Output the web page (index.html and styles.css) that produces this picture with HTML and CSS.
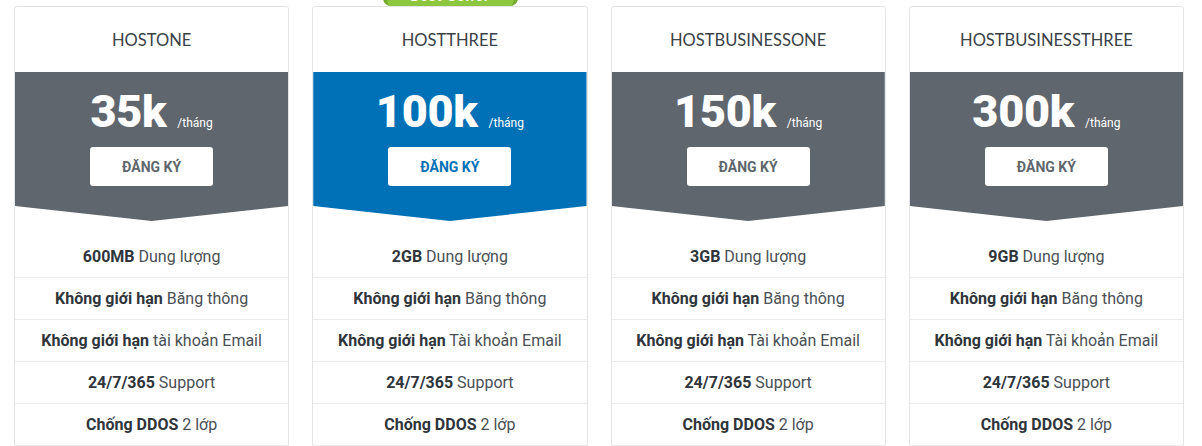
FILE: index.html
```html
<!DOCTYPE html>
<html lang="vi">
<head>
<meta charset="utf-8">
<title>Bảng giá Hosting</title>
<link rel="stylesheet" href="styles.css">
</head>
<body>
<div class="pricing">
  <div class="card">
    <div class="card-title">HOSTONE</div>
    <div class="band">
      <div class="price"><span class="amount">35k</span><span class="per">/tháng</span></div>
      <a class="btn" href="#">ĐĂNG KÝ</a>
    </div>
    <ul class="features">
      <li><b>600MB</b> Dung lượng</li>
      <li><b>Không giới hạn</b> Băng thông</li>
      <li><b>Không giới hạn</b> tài khoản Email</li>
      <li><b>24/7/365</b> Support</li>
      <li><b>Chống DDOS</b> 2 lớp</li>
    </ul>
  </div>
  <div class="card featured">
    <div class="badge">Best Seller</div>
    <div class="card-title">HOSTTHREE</div>
    <div class="band">
      <div class="price"><span class="amount">100k</span><span class="per">/tháng</span></div>
      <a class="btn" href="#">ĐĂNG KÝ</a>
    </div>
    <ul class="features">
      <li><b>2GB</b> Dung lượng</li>
      <li><b>Không giới hạn</b> Băng thông</li>
      <li><b>Không giới hạn</b> Tài khoản Email</li>
      <li><b>24/7/365</b> Support</li>
      <li><b>Chống DDOS</b> 2 lớp</li>
    </ul>
  </div>
  <div class="card">
    <div class="card-title">HOSTBUSINESSONE</div>
    <div class="band">
      <div class="price"><span class="amount">150k</span><span class="per">/tháng</span></div>
      <a class="btn" href="#">ĐĂNG KÝ</a>
    </div>
    <ul class="features">
      <li><b>3GB</b> Dung lượng</li>
      <li><b>Không giới hạn</b> Băng thông</li>
      <li><b>Không giới hạn</b> Tài khoản Email</li>
      <li><b>24/7/365</b> Support</li>
      <li><b>Chống DDOS</b> 2 lớp</li>
    </ul>
  </div>
  <div class="card">
    <div class="card-title">HOSTBUSINESSTHREE</div>
    <div class="band">
      <div class="price"><span class="amount">300k</span><span class="per">/tháng</span></div>
      <a class="btn" href="#">ĐĂNG KÝ</a>
    </div>
    <ul class="features">
      <li><b>9GB</b> Dung lượng</li>
      <li><b>Không giới hạn</b> Băng thông</li>
      <li><b>Không giới hạn</b> Tài khoản Email</li>
      <li><b>24/7/365</b> Support</li>
      <li><b>Chống DDOS</b> 2 lớp</li>
    </ul>
  </div>
</div>
</body>
</html>
```

FILE: styles.css
```css
html, body {
  margin: 0;
  padding: 0;
  background: #ffffff;
}

body {
  font-family: Roboto, "Liberation Sans", sans-serif;
  color: #444;
  overflow: hidden;
}

.pricing {
  display: grid;
  grid-template-columns: repeat(4, 1fr);
  column-gap: 23px;
  padding: 6px 18px 0 14px;
}

.card {
  position: relative;
  border: 1px solid #e4e4e4;
  border-radius: 3px;
  background: #fff;
}

.badge {
  position: absolute;
  left: 50%;
  top: -31px;
  width: 135px;
  height: 30px;
  margin-left: -67px;
  box-sizing: border-box;
  padding-top: 12px;
  background: #8dc63f;
  border-left: 4px solid #74aa2c;
  border-right: 4px solid #74aa2c;
  border-radius: 0 0 8px 8px;
  color: #fff;
  font-size: 13px;
  font-weight: 700;
  letter-spacing: 1.5px;
  text-align: center;
  line-height: 18px;
}

.card-title {
  height: 65px;
  display: flex;
  align-items: center;
  justify-content: center;
  font-family: Lato, "Open Sans", sans-serif;
  font-size: 16.5px;
  letter-spacing: 0;
  color: #3a4149;
  padding-top: 1px;
  box-sizing: border-box;
}

.band {
  height: 149px;
  box-sizing: border-box;
  padding-top: 17px;
  background: #5f666d;
  color: #fff;
  display: flex;
  flex-direction: column;
  align-items: center;
  clip-path: polygon(0 0, 100% 0, 100% 134px, 50% 100%, 0 134px);
}

.featured .band {
  background: #0071b7;
}

.price {
  display: flex;
  align-items: baseline;
  line-height: 1;
}

.amount {
  font-size: 45px;
  font-weight: 900;
  letter-spacing: -0.3px;
}

.per {
  font-size: 12px;
  margin-left: 11px;
}

.btn {
  margin-top: 13px;
  width: 123px;
  height: 39px;
  display: flex;
  align-items: center;
  justify-content: center;
  background: #fff;
  border-radius: 3px;
  text-decoration: none;
  color: #5f666d;
  font-size: 14px;
  font-weight: 700;
}

.featured .btn {
  color: #0071b7;
}

.features {
  list-style: none;
  margin: 15px 0 0;
  padding: 0;
}

.features li {
  height: 41px;
  border-bottom: 1px solid #ececec;
  display: flex;
  align-items: center;
  justify-content: center;
  white-space: pre;
  font-size: 16px;
  color: #4a4f55;
}

.features b {
  font-weight: 700;
  color: #2f353b;
}
```
